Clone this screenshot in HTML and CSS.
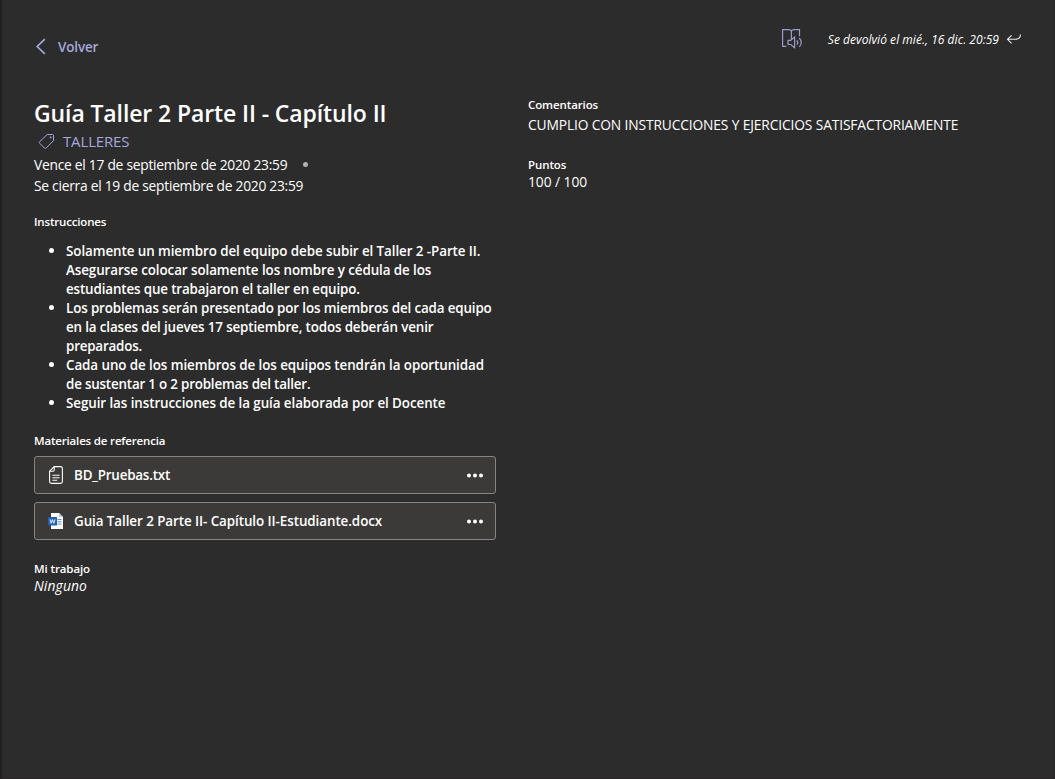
FILE: index.html
```html
<!DOCTYPE html>
<html lang="es">
<head>
<meta charset="utf-8">
<title>Guía Taller 2 Parte II - Capítulo II</title>
<link rel="stylesheet" href="styles.css">
</head>
<body>
<main class="page">
  <header class="topbar">
    <a class="back">
      <svg class="chevron" width="12" height="18" viewBox="0 0 12 18"><path d="M10.800 1.200 3.200 8.500l7.600 7.300"/></svg>
      <span class="back-label">Volver</span>
    </a>
    <div class="status">
      <svg class="reader" width="22" height="22" viewBox="0 0 22 22"><path d="M5.300 18.300H1.600V1.700h5.900c1.700 0 2.900.8 2.900 2v7.500M10.400 3.700c0-1.200 1.200-2 2.900-2h5.200v6.600M7 12.300h2.700l3.900-3.300v10.800l-3.900-3.300H7zM15.800 12.300c1.200 1.300 1.200 3 0 4.300M18.200 10c2.700 2.600 2.700 6.300 0 8.900"/></svg>
      <span class="status-text">Se devolvió el mié., 16 dic. 20:59</span>
      <svg class="return" width="16" height="12" viewBox="0 0 16 12"><path d="M5.600 2.300 1.500 6.300l4.100 4M1.700 6.300h8c3.100 0 4.700-1.700 4.700-4.700"/></svg>
    </div>
  </header>
  <div class="columns">
    <section class="left">
      <h1 class="title">Guía Taller 2 Parte II - Capítulo II</h1>
      <div class="category">
        <svg class="tag" width="17" height="17" viewBox="0 0 17 17"><path d="M9.300 1.500h5.200c.7 0 1 .4 1 1v5.200l-7.300 7.300c-.6.600-1.200.600-1.800 0L1.700 10.300c-.5-.6-.5-1.100 0-1.700z"/><circle cx="12.700" cy="4.300" r=".6"/></svg>
        <span>TALLERES</span>
      </div>
      <div class="due"><span>Vence el 17 de septiembre de 2020 23:59</span><i class="dot"></i></div>
      <div class="due"><span>Se cierra el 19 de septiembre de 2020 23:59</span></div>
      <h2 class="label label-tight instructions-label">Instrucciones</h2>
      <ul class="instructions">
        <li><span class="line">Solamente un miembro del equipo debe subir el Taller 2 -Parte II.</span><span class="line">Asegurarse colocar solamente los nombre y cédula de los</span><span class="line snug">estudiantes que trabajaron el taller en equipo.</span></li>
        <li><span class="line snug">Los problemas serán presentado por los miembros del cada equipo</span><span class="line snug">en la clases del jueves 17 septiembre, todos deberán venir</span><span class="line tight">preparados.</span></li>
        <li><span class="line">Cada uno de los miembros de los equipos tendrán la oportunidad</span><span class="line tight">de sustentar 1 o 2 problemas del taller.</span></li>
        <li><span class="line">Seguir las instrucciones de la guía elaborada por el Docente</span></li>
      </ul>
      <h2 class="label label-tight materials-label">Materiales de referencia</h2>
      <div class="files">
        <div class="file">
          <svg class="txt-icon" width="16" height="20" viewBox="0 0 16 20"><path d="M6.200 1.600h6.300c1.100 0 1.900.8 1.900 1.900v13c0 1.100-.8 1.900-1.900 1.900h-9c-1.100 0-1.900-.8-1.900-1.900V6.200zM6.200 1.800v3.300c0 .7-.4 1.100-1.100 1.100H1.800M4.400 10.200h7.200M4.400 12.700h7.200M4.400 15.200h4.800"/></svg>
          <span class="file-name tight">BD_Pruebas.txt</span>
          <svg class="more" width="18" height="6" viewBox="0 0 18 6"><circle cx="3" cy="3.500" r="2"/><circle cx="9" cy="3.500" r="2"/><circle cx="15" cy="3.500" r="2"/></svg>
        </div>
        <div class="file">
          <svg class="word-icon" width="16" height="16" viewBox="0 0 16 16">
            <path fill="#fff" d="M3 0h8l4 4v12H3z"/>
            <path fill="#b9c9df" d="M11 0v4h4z"/>
            <path fill="#5b8fd0" d="M9.500 6h4v1h-4zM9.500 8.300h4v1h-4zM9.500 10.600h4v1h-4z"/>
            <rect fill="#2260b8" x="0" y="4" width="9" height="8.500" rx=".6"/>
            <path class="word-mark" d="M2 6.300 3.200 10.300 4.500 6.600l1.300 3.700L7 6.300"/>
          </svg>
          <span class="file-name">Guia Taller 2 Parte II- Capítulo II-Estudiante.docx</span>
          <svg class="more" width="18" height="6" viewBox="0 0 18 6"><circle cx="3" cy="3.500" r="2"/><circle cx="9" cy="3.500" r="2"/><circle cx="15" cy="3.500" r="2"/></svg>
        </div>
      </div>
      <h2 class="label work-label">Mi trabajo</h2>
      <p class="none">Ninguno</p>
    </section>
    <section class="right">
      <h2 class="label">Comentarios</h2>
      <p class="comment">CUMPLIO CON INSTRUCCIONES Y EJERCICIOS SATISFACTORIAMENTE</p>
      <h2 class="label points-label">Puntos</h2>
      <p class="points">100 / 100</p>
    </section>
  </div>
</main>
</body>
</html>
```
FILE: styles.css
```css
* {
  box-sizing: border-box;
}

body {
  margin: 0;
  background: #2d2c2c;
  color: #fff;
  font-family: "Open Sans", "Noto Sans", sans-serif;
  font-size: 13.4px;
  white-space: nowrap;
}

h1, h2, p, ul {
  margin: 0;
  padding: 0;
}

svg {
  display: block;
  flex: none;
  fill: none;
}

.page {
  height: 779px;
  padding-left: 32px;
  border-left: 2px solid #212020;
  border-right: 1px solid #252424;
  border-bottom: 1px solid #292727;
  overflow: hidden;
}

.topbar {
  display: flex;
  justify-content: space-between;
  align-items: flex-start;
  height: 97px;
  padding-right: 32px;
}

.back {
  display: flex;
  align-items: center;
  gap: 12px;
  margin-top: 37px;
  color: #a6a7dc;
  font-weight: 600;
  line-height: 20px;
  letter-spacing: -0.1px;
}

.chevron {
  stroke: #a6a7dc;
  stroke-width: 1.7;
}

.status {
  display: flex;
  align-items: center;
  margin-top: 28px;
  font-size: 12px;
  font-style: italic;
  line-height: 16px;
  letter-spacing: 0.04px;
}

.status-text {
  padding-top: 2px;
}

.reader {
  margin-right: 25px;
  stroke: #9a9bcd;
  stroke-width: 1.2;
}

.return {
  margin-left: 7px;
  stroke: #e8e8e8;
  stroke-width: 1.1;
}

.columns {
  display: grid;
  grid-template-columns: 462px 1fr;
  gap: 32px;
}

.title {
  font-size: 23px;
  font-weight: 600;
  line-height: 32px;
  letter-spacing: -0.11px;
}

.category {
  display: flex;
  align-items: center;
  gap: 8px;
  margin-bottom: 1px;
  padding-left: 4px;
  color: #a6a7dc;
  font-size: 15px;
  line-height: 24px;
  letter-spacing: -0.15px;
}

.tag {
  stroke: #a6a7dc;
}

.due {
  display: flex;
  align-items: center;
  font-size: 13.8px;
  line-height: 21px;
  letter-spacing: -0.26px;
}

.dot {
  width: 5px;
  height: 5px;
  margin-left: 16px;
  border-radius: 50%;
  background: #b3b0ad;
}

.label {
  font-size: 11.5px;
  font-weight: 600;
  line-height: 16px;
  letter-spacing: -0.1px;
}

.label-tight {
  letter-spacing: -0.17px;
}

.instructions-label {
  margin-top: 18px;
}

.instructions {
  margin-top: 12px;
  padding-left: 32px;
  font-weight: 600;
  line-height: 19px;
  list-style: none;
}

.instructions li {
  position: relative;
}

.instructions li::before {
  content: "";
  position: absolute;
  top: 6px;
  left: -17px;
  width: 5px;
  height: 5px;
  border-radius: 50%;
  background: #fff;
}

.file-name {
  flex: 1;
  letter-spacing: -0.07px;
}

.line {
  display: block;
  letter-spacing: -0.078px;
}

.snug {
  letter-spacing: -0.14px;
}

.tight {
  letter-spacing: -0.2px;
}

.materials-label {
  margin-top: 20px;
}

.files {
  display: grid;
  gap: 8px;
  margin-top: 7px;
}

.file {
  display: flex;
  align-items: center;
  gap: 10px;
  height: 38px;
  padding: 0 11px 0 13px;
  border: 1px solid #868482;
  border-radius: 3px;
  background: #3b3a39;
  font-weight: 600;
}

.txt-icon {
  stroke: #fff;
  stroke-width: 1.1;
}

.word-mark {
  stroke: #fff;
  stroke-width: 0.9;
}

.more {
  fill: #fff;
}

.work-label {
  margin-top: 21px;
}

.none {
  font-size: 13.8px;
  font-style: italic;
  line-height: 18px;
  letter-spacing: 0.15px;
}

.comment {
  margin-top: 2px;
  font-size: 13.8px;
  line-height: 19px;
  letter-spacing: -0.14px;
}

.points-label {
  margin-top: 23px;
}

.points {
  font-size: 13.8px;
  line-height: 18px;
  letter-spacing: -0.05px;
}
```
